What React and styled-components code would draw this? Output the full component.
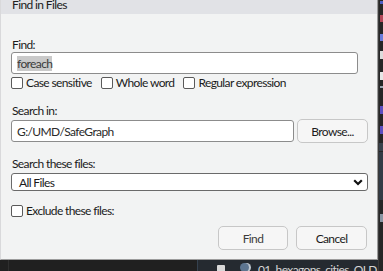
import React from 'react'
import styled, { createGlobalStyle } from 'styled-components'

const GlobalStyle = createGlobalStyle`
  html, body {
    margin: 0;
    padding: 0;
    background: #232323;
    font-family: "Lato", "Noto Sans", sans-serif;
    font-size: 12px;
    letter-spacing: -0.62px;
    color: #1b1b1b;
  }
`

export default function App() {
  return (
    <>
      <GlobalStyle />
      <Screen>
        <Dialog>
          <TitleBar>Find in Files</TitleBar>
          <Body>
            <Label top={24}>Find:</Label>
            <TextInput width={347}>
              <Selected>foreach</Selected>
            </TextInput>
            <CheckRow>
              <CheckItem><Box /><span>Case sensitive</span></CheckItem>
              <CheckItem><Box /><span>Whole word</span></CheckItem>
              <CheckItem><Box /><span>Regular expression</span></CheckItem>
            </CheckRow>

            <Label top={15}>Search in:</Label>
            <PathRow>
              <TextInput width={283}>G:/UMD/SafeGraph</TextInput>
              <Button width={71}>Browse...</Button>
            </PathRow>

            <Label top={14}>Search these files:</Label>
            <Select>
              <span>All Files</span>
              <svg width="10" height="7" viewBox="0 0 10 7">
                <polyline points="1.2,1.2 5,5 8.8,1.2" fill="none" stroke="#111" strokeWidth="2.2" />
              </svg>
            </Select>

            <CheckRow top={14}>
              <CheckItem><Box /><span>Exclude these files:</span></CheckItem>
            </CheckRow>

            <ButtonRow>
              <Button width={70} muted>Find</Button>
              <Button width={71}>Cancel</Button>
            </ButtonRow>
          </Body>
        </Dialog>

        <SideStrip>
          <Mark top={1} height={3} color="#4e5fc4" />
          <Mark top={11} height={7} color="#b5485a" />
          <Mark top={12} height={7} color="#6c7ddc" />
          <Mark top={10} height={8} color="#dcdcdc" />
          <Mark top={13} height={8} color="#e6e6e6" />
          <Mark top={6} height={2} color="#9aa4b0" />
          <Mark top={18} height={8} color="#5d4fc0" />
          <Mark top={12} height={8} color="#5d4fc0" />
          <Band top={9} height={8} color="#39424c" />
          <Band top={1} height={48} color="#323b45" />
          <Mark top={14} height={8} color="#8a95a3" />
        </SideStrip>

        <BottomStrip>
          <LeftDock />
          <FilePane>
            <SquareIcon />
            <FileIcon />
            <FileName>01_hexagons_cities_OLD.R</FileName>
          </FilePane>
        </BottomStrip>
      </Screen>
    </>
  )
}

const Screen = styled.div`
  width: 383px;
  height: 271px;
  display: grid;
  grid-template-columns: 378px 5px;
  grid-template-rows: 260px 11px;
  overflow: hidden;
  background: #232323;
`

const Dialog = styled.div`
  grid-column: 1;
  grid-row: 1;
  display: flex;
  flex-direction: column;
  background: #f2f3f3;
  border-left: 1px solid #d9d9db;
  border-right: 1px solid #9c9c9c;
  border-bottom: 1px solid #9c9c9c;
  box-sizing: border-box;
`

const TitleBar = styled.div`
  height: 14px;
  flex: none;
  background: #e1e2e6;
  padding-left: 11px;
  line-height: 10px;
  color: #202020;
  overflow: hidden;
`

const Body = styled.div`
  flex: 1;
  display: flex;
  flex-direction: column;
  padding: 0 9px 9px 10px;
`

const Label = styled.div`
  margin-top: ${p => p.top || 0}px;
  padding-left: 1px;
  height: 14px;
  line-height: 14px;
`

const TextInput = styled.div`
  width: ${p => p.width}px;
  height: 22px;
  box-sizing: border-box;
  border: 1px solid #8c8c8c;
  border-radius: 3px;
  background: #ffffff;
  padding-left: 5px;
  display: flex;
  align-items: center;
  color: #2a2a2a;
`

const Selected = styled.span`
  background: #c9c9c9;
  line-height: 15px;
  color: #3a3a3a;
`

const CheckRow = styled.div`
  display: flex;
  gap: 9px;
  margin-top: ${p => p.top ?? 3}px;
  height: 12px;
  align-items: center;
`

const CheckItem = styled.label`
  display: flex;
  align-items: center;
  gap: 3px;
  line-height: 12px;
`

const Box = styled.span`
  width: 12px;
  height: 12px;
  box-sizing: border-box;
  border: 1px solid #5a5a5a;
  border-radius: 2px;
  background: #ffffff;
  flex: none;
`

const PathRow = styled.div`
  display: flex;
  align-items: center;
  gap: 3px;
  margin-top: 1px;
  height: 24px;
`

const Button = styled.div`
  width: ${p => p.width}px;
  height: 24px;
  box-sizing: border-box;
  border: 1px solid #c7c7c7;
  border-radius: 5px;
  background: #f6f6f6;
  display: flex;
  align-items: center;
  justify-content: center;
  color: ${p => (p.muted ? '#3c3c3c' : '#1b1b1b')};
`

const Select = styled.div`
  margin-top: 2px;
  width: 357px;
  height: 18px;
  box-sizing: border-box;
  border: 1px solid #6a6a6a;
  border-radius: 3px;
  background: #ffffff;
  display: flex;
  align-items: center;
  justify-content: space-between;
  padding: 0 4px 0 7px;
`

const ButtonRow = styled.div`
  margin-top: auto;
  display: flex;
  justify-content: flex-end;
  gap: 8px;
  padding-right: 1px;
`

const SideStrip = styled.div`
  grid-column: 2;
  grid-row: 1 / span 2;
  background: #262626;
  border-left: 1px solid #3a3a3a;
  display: flex;
  flex-direction: column;
  overflow: hidden;
`

const Mark = styled.div`
  margin-top: ${p => p.top || 0}px;
  height: ${p => p.height}px;
  width: 3px;
  margin-left: 1px;
  background: ${p => p.color};
  flex: none;
`

const Band = styled.div`
  margin-top: ${p => p.top}px;
  height: ${p => p.height}px;
  background: ${p => p.color};
  flex: none;
`

const BottomStrip = styled.div`
  grid-column: 1;
  grid-row: 2;
  display: flex;
  background: #202020;
`

const LeftDock = styled.div`
  width: 188px;
  border-left: 1px solid #2f2f2f;
  margin-left: 8px;
`

const FilePane = styled.div`
  flex: 1;
  display: flex;
  align-items: flex-start;
  background: #252a30;
  border-left: 1px solid #35414e;
  padding-top: 3px;
  overflow: hidden;
`

const SquareIcon = styled.span`
  width: 8px;
  height: 8px;
  margin-left: 19px;
  margin-top: 2px;
  background: #d8d8d8;
  border-radius: 1px;
  flex: none;
`

const FileIcon = styled.span`
  width: 9px;
  height: 9px;
  margin-left: 15px;
  border-radius: 50%;
  background: #5d7590;
  box-shadow: 2px 0 0 #c0c8d0;
  flex: none;
`

const FileName = styled.span`
  margin-left: 9px;
  color: #d6d6d6;
  white-space: nowrap;
  line-height: 14px;
`
